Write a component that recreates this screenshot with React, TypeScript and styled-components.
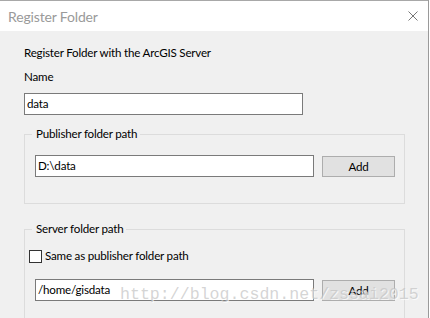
import React from "react";
import styled, { createGlobalStyle } from "styled-components";

const Global = createGlobalStyle`
  html, body { margin: 0; padding: 0; background: #ffffff; }
  * { box-sizing: border-box; }
`;

const Screen = styled.div`
  position: relative;
  width: 430px;
  height: 318px;
  display: flex;
  overflow: hidden;
  font-family: Lato, "Noto Sans", sans-serif;
  font-size: 11.6px;
  letter-spacing: -0.2px;
  color: #000;
`;

const Window = styled.div`
  width: 428px;
  height: 318px;
  display: flex;
  flex-direction: column;
  overflow: hidden;
  border-top: 1px solid #a8a8a8;
`;

const Edge = styled.div`
  width: 2px;
  height: 318px;
  border-left: 1px solid #9a9a9a;
  background: #ffffff;
`;

const TitleBar = styled.div`
  flex: 0 0 30px;
  background: #ffffff;
  display: flex;
  align-items: center;
  justify-content: space-between;
  padding: 0 10px 0 8px;
`;

const Title = styled.span`
  font-size: 14px;
  letter-spacing: -0.15px;
  color: #9a9a9a;
`;

const Close = styled.svg`
  width: 10px;
  height: 10px;
`;

const Body = styled.div`
  flex: 1 0 auto;
  background: #f0f0f0;
  padding: 14px 0 0 24px;
  display: flex;
  flex-direction: column;
  & > * {
    flex-shrink: 0;
  }
`;

const Label = styled.div<{ $mt?: number }>`
  line-height: 16px;
  margin-top: ${(p) => p.$mt ?? 0}px;
`;

const TextBox = styled.div<{ $w: number; $mt?: number }>`
  width: ${(p) => p.$w}px;
  height: 22px;
  flex-shrink: 0;
  margin-top: ${(p) => p.$mt ?? 0}px;
  background: #ffffff;
  border: 1px solid #7a7a7a;
  padding: 0 0 0 2px;
  line-height: 19px;
`;

const Group = styled.fieldset<{ $mt: number }>`
  width: 381px;
  margin: ${(p) => p.$mt}px 0 0 0;
  padding: 0 0 0 10px;
  border: 1px solid #dcdcdc;
  min-width: 0;
`;

const Legend = styled.legend`
  margin-left: -3px;
  padding: 0 3px 0 4px;
  line-height: 16px;
`;

const Row = styled.div<{ $mt: number; $mb: number }>`
  display: flex;
  align-items: flex-start;
  gap: 8px;
  margin-top: ${(p) => p.$mt}px;
  margin-bottom: ${(p) => p.$mb}px;
`;

const Button = styled.div`
  width: 73px;
  height: 21px;
  margin-top: 1px;
  background: #e1e1e1;
  border: 1px solid #adadad;
  display: flex;
  align-items: center;
  justify-content: center;
  line-height: 16px;
`;

const CheckRow = styled.label`
  display: flex;
  align-items: center;
  gap: 3px;
  margin: 11px 0 0 -6px;
  line-height: 16px;
`;

const Box = styled.span`
  width: 13px;
  height: 13px;
  border: 1px solid #333333;
  background: #ffffff;
`;

const Watermark = styled.div`
  position: absolute;
  left: 120px;
  top: 285px;
  font-family: "Liberation Mono", "DejaVu Sans Mono", monospace;
  font-size: 16.6px;
  letter-spacing: 0;
  line-height: 20px;
  color: rgba(195, 195, 195, 0.7);
  text-shadow: 1px 1px 0 rgba(255, 255, 255, 0.7);
  white-space: nowrap;
  pointer-events: none;
`;

export default function App() {
  return (
    <>
      <Global />
      <Screen>
        <Window>
          <TitleBar>
            <Title>Register Folder</Title>
            <Close viewBox="0 0 10 10">
              <path d="M0.5 0.5 L9.5 9.5 M9.5 0.5 L0.5 9.5" stroke="#777" strokeWidth="1" fill="none" />
            </Close>
          </TitleBar>
          <Body>
            <Label>Register Folder with the ArcGIS Server</Label>
            <Label $mt={8}>Name</Label>
            <TextBox $w={279} $mt={8}>data</TextBox>
            <Group $mt={11}>
              <Legend>Publisher folder path</Legend>
              <Row $mt={13} $mb={26}>
                <TextBox $w={279}>D:\data</TextBox>
                <Button>Add</Button>
              </Row>
            </Group>
            <Group $mt={17}>
              <Legend>Server folder path</Legend>
              <CheckRow>
                <Box />
                <span>Same as publisher folder path</span>
              </CheckRow>
              <Row $mt={15} $mb={20}>
                <TextBox $w={279}>/home/gisdata</TextBox>
                <Button>Add</Button>
              </Row>
            </Group>
          </Body>
        </Window>
        <Edge />
        <Watermark>http://blog.csdn.net/zssai2015</Watermark>
      </Screen>
    </>
  );
}
